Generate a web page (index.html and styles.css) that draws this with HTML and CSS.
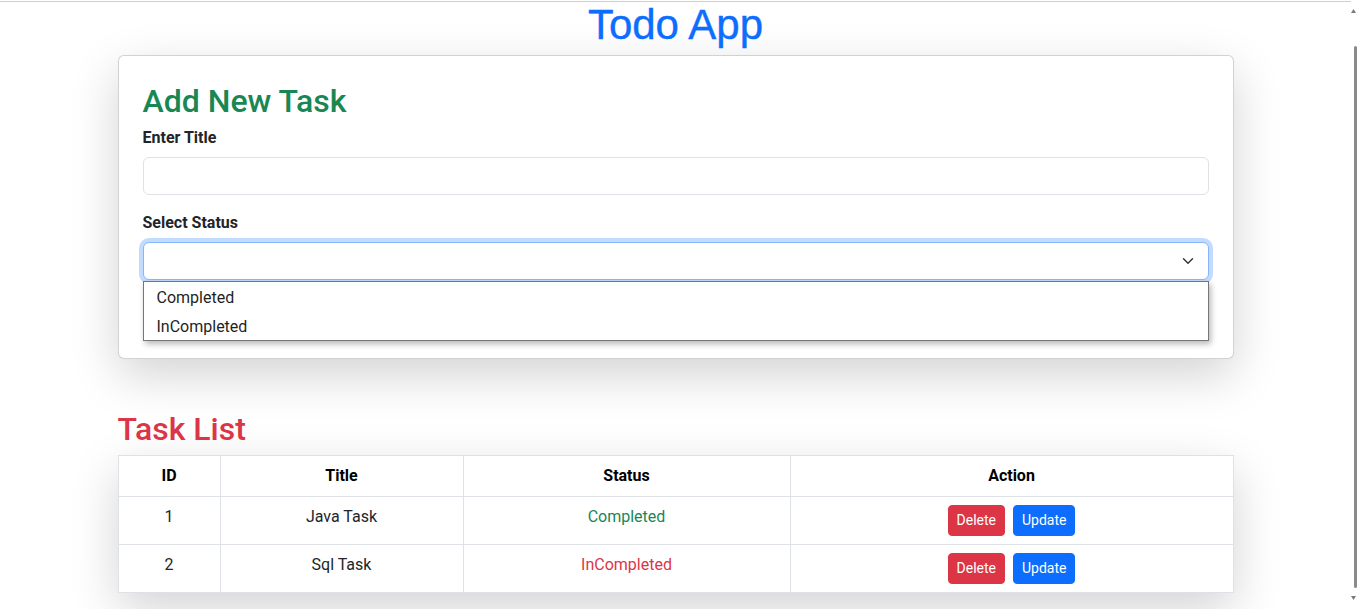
FILE: index.html
```html
<!DOCTYPE html>
<html lang="en">
<head>
<meta charset="utf-8">
<title>Todo App</title>
<link rel="stylesheet" href="styles.css">
</head>
<body>
<div class="topline"></div>
<div class="page">
  <h1 class="app-title">Todo App</h1>
  <div class="container">
    <div class="card">
      <h2 class="card-title">Add New Task</h2>
      <label class="field-label" for="title">Enter Title</label>
      <input id="title" class="input" type="text">
      <label class="field-label">Select Status</label>
      <div class="select-wrap">
        <div class="select">
          <svg class="chevron" width="16" height="12" viewBox="0 0 16 16"><path d="M2 5l6 6 6-6" fill="none" stroke="#343a40" stroke-width="2" stroke-linecap="round" stroke-linejoin="round"/></svg>
        </div>
        <ul class="popup">
          <li>Completed</li>
          <li>InCompleted</li>
        </ul>
      </div>
      <div class="btn-slot"></div>
    </div>

    <h2 class="list-title">Task List</h2>
    <table class="task-table">
      <colgroup>
        <col class="c-id"><col class="c-title"><col class="c-status"><col class="c-action">
      </colgroup>
      <thead>
        <tr><th>ID</th><th>Title</th><th>Status</th><th>Action</th></tr>
      </thead>
      <tbody>
        <tr>
          <td>1</td>
          <td>Java Task</td>
          <td class="st-done">Completed</td>
          <td><div class="actions"><button class="btn btn-sm btn-danger">Delete</button><button class="btn btn-sm btn-primary">Update</button></div></td>
        </tr>
        <tr>
          <td>2</td>
          <td>Sql Task</td>
          <td class="st-todo">InCompleted</td>
          <td><div class="actions"><button class="btn btn-sm btn-danger">Delete</button><button class="btn btn-sm btn-primary">Update</button></div></td>
        </tr>
      </tbody>
    </table>
  </div>
</div>
<div class="scrollbar">
  <svg class="sb-up" width="5" height="4" viewBox="0 0 5 4"><path d="M0 4L2.5 0L5 4Z" fill="#7a7a7a"/></svg>
  <div class="sb-thumb"></div>
  <svg class="sb-down" width="5" height="4" viewBox="0 0 5 4"><path d="M0 0L2.5 4L5 0Z" fill="#7a7a7a"/></svg>
</div>
</body>
</html>
```
FILE: styles.css
```css
html, body {
  margin: 0;
  padding: 0;
}
body {
  font-family: Roboto, "Noto Sans", sans-serif;
  font-size: 16px;
  line-height: 24px;
  color: #212529;
  background: #fff;
  overflow: hidden;
  height: 609px;
}
.topline {
  position: fixed;
  top: 1px;
  left: 0;
  right: 6px;
  height: 1px;
  background: #cfcfcf;
  z-index: 5;
}
.page {
  padding-right: 6px;
}
.app-title {
  margin: 1px 0 6px;
  font-family: "Liberation Sans", Arial, sans-serif;
  font-size: 42px;
  line-height: 48px;
  font-weight: normal;
  text-align: center;
  color: #0d6efd;
  -webkit-text-stroke: 0.4px #0d6efd;
}
.container {
  max-width: 1140px;
  margin: 0 auto;
  padding: 0 12px;
  box-sizing: border-box;
}
.card {
  background: #fff;
  border: 1px solid rgba(0, 0, 0, 0.175);
  border-radius: 6px;
  padding: 24px;
  box-shadow: 0 16px 48px rgba(0, 0, 0, 0.175);
}
.card-title {
  margin: 0 0 4px;
  font-size: 32px;
  line-height: 42px;
  font-weight: 500;
  color: #198754;
}
.field-label {
  display: block;
  font-weight: 700;
  line-height: 24px;
  margin-bottom: 7px;
}
.input {
  display: block;
  width: 100%;
  box-sizing: border-box;
  height: 38px;
  margin: 0 0 16px;
  border: 1px solid #dee2e6;
  border-radius: 6px;
  background: #fff;
  font: inherit;
  outline: none;
}
.select-wrap {
  position: relative;
  margin-bottom: 16px;
}
.select {
  height: 38px;
  box-sizing: border-box;
  border: 1px solid #86b7fe;
  border-radius: 6px;
  box-shadow: 0 0 0 4px rgba(13, 110, 253, 0.25);
  display: flex;
  align-items: center;
  justify-content: flex-end;
  padding-right: 12px;
  background: #fff;
}
.chevron {
  display: block;
}
.popup {
  position: absolute;
  top: 39px;
  left: 0;
  right: 0;
  margin: 0;
  padding: 0;
  list-style: none;
  background: #fff;
  border: 1px solid #767676;
  box-shadow: 2px 3px 6px rgba(0, 0, 0, 0.28);
  z-index: 3;
}
.popup li {
  height: 29px;
  line-height: 31px;
  padding-left: 13px;
  color: #1f1f1f;
}
.btn-slot {
  height: 38px;
}
.btn {
  display: inline-block;
  font-family: inherit;
  border: 1px solid transparent;
  color: #fff;
  cursor: pointer;
}
.btn-primary {
  background: #0d6efd;
  border-color: #0d6efd;
}
.btn-danger {
  background: #dc3545;
  border-color: #dc3545;
}
.btn-sm {
  padding: 4px 8px;
  font-size: 14px;
  line-height: 21px;
  border-radius: 4px;
}
.list-title {
  margin: 49px 0 5px;
  font-size: 32px;
  line-height: 42px;
  font-weight: 500;
  color: #dc3545;
}
.task-table {
  width: 100%;
  border-collapse: collapse;
  table-layout: fixed;
  background: #fff;
  box-shadow: 0 16px 48px rgba(0, 0, 0, 0.175);
}
.c-id { width: 102px; }
.c-title { width: 243px; }
.c-status { width: 327px; }
.task-table th,
.task-table td {
  border: 1px solid #dee2e6;
  padding: 8px;
  text-align: center;
  vertical-align: top;
  line-height: 24px;
}
.task-table th {
  font-weight: 700;
  color: #000;
}
.task-table td {
  color: #212529;
}
.task-table td.st-done {
  color: #198754;
}
.task-table td.st-todo {
  color: #dc3545;
}
.actions {
  display: flex;
  justify-content: center;
  gap: 8px;
}
.scrollbar {
  position: fixed;
  top: 0;
  right: 0;
  bottom: 0;
  width: 6px;
  background: #fff;
  z-index: 6;
}
.sb-up {
  position: absolute;
  top: 9px;
  right: 1px;
}
.sb-down {
  position: absolute;
  bottom: 9px;
  right: 1px;
}
.sb-thumb {
  position: absolute;
  top: 46px;
  bottom: 21px;
  right: 0;
  width: 3px;
  border-radius: 2px;
  background: #8a8a8a;
}
```
